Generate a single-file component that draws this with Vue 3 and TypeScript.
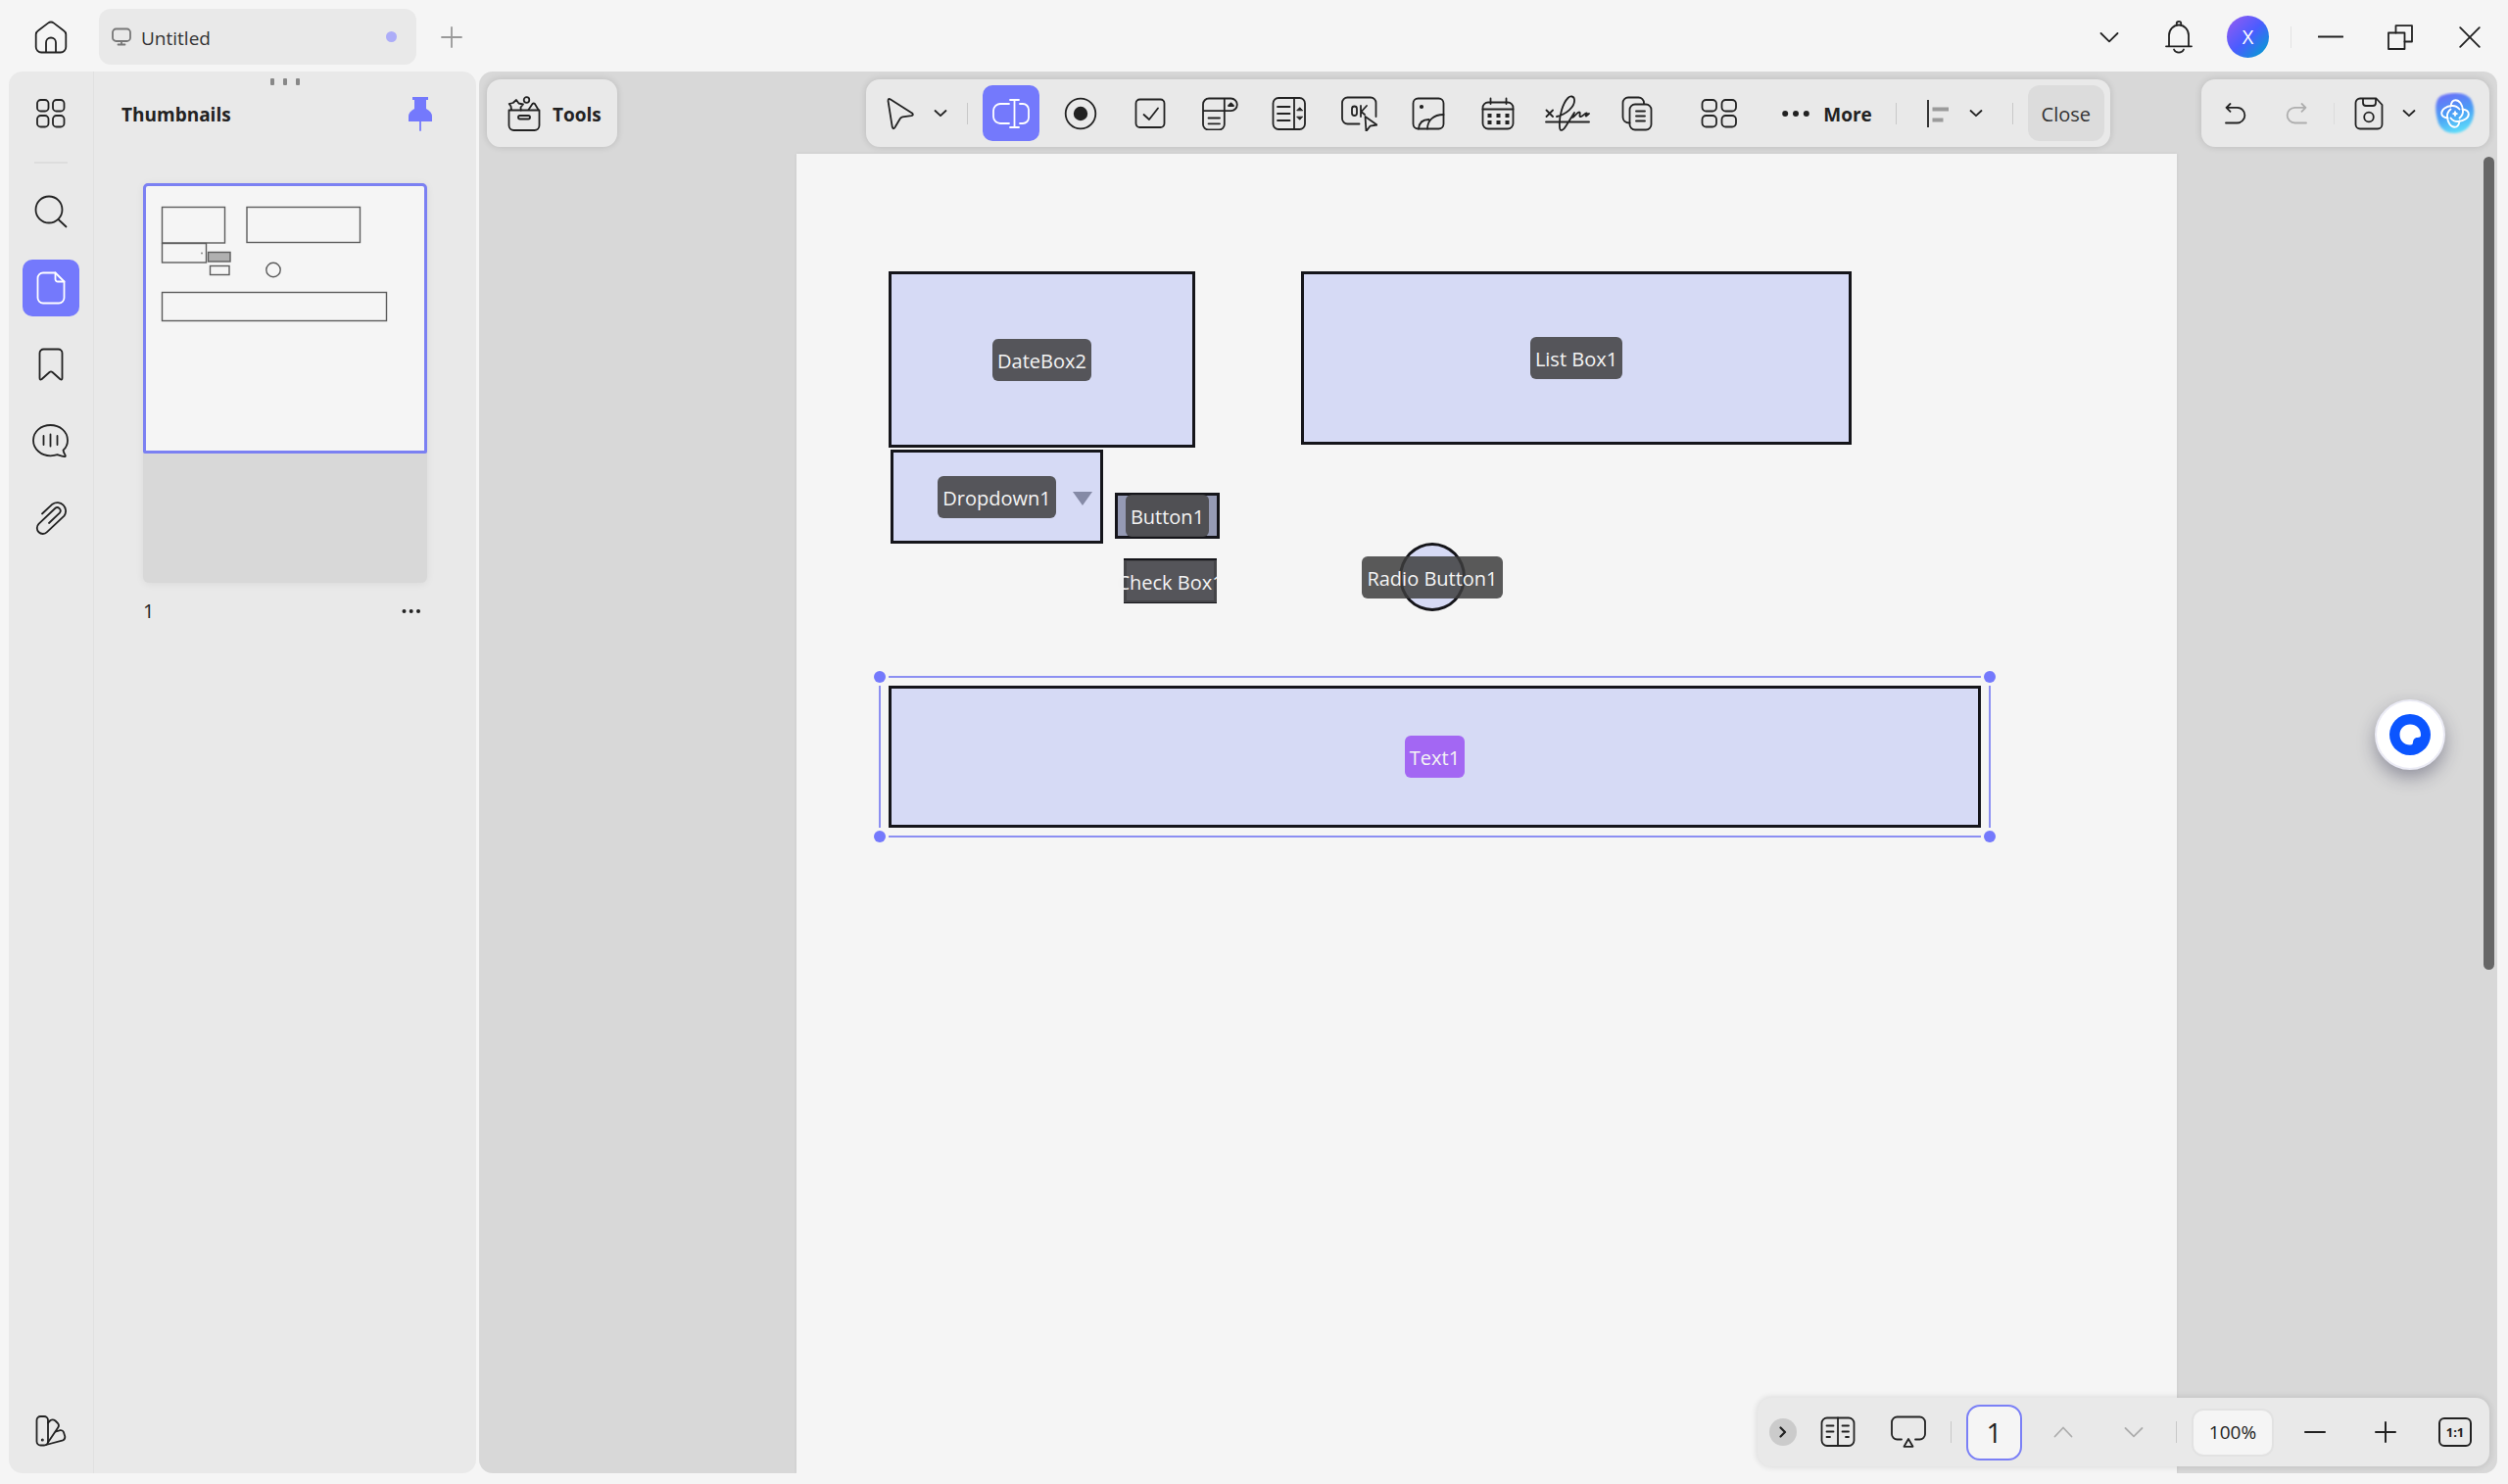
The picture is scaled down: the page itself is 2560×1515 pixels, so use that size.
<script setup lang="ts">
import { h, ref } from 'vue'

type Glyph = { w: number; h: number; body: string }

const glyphs: Record<string, Glyph> = {
  home: { w: 34, h: 34, body: '<path d="M14 2.6a5 5 0 0 1 6 0l10 7.6a5 5 0 0 1 2.3 4V27a5.5 5.5 0 0 1-5.5 5.5H7.2A5.5 5.5 0 0 1 1.7 27V14.2a5 5 0 0 1 2.3-4ZM12 32.5V22.5a5 5 0 0 1 10 0v10"/>' },
  monitor: { w: 20, h: 20, body: '<rect x="1" y="1.5" width="18" height="12.5" rx="3.5"/><path d="M10 14v3M6.5 17.5h7"/>' },
  plus: { w: 22, h: 22, body: '<path d="M11 1v20M1 11h20"/>' },
  chevronWide: { w: 20, h: 12, body: '<path d="M1.5 2 10 10.3 18.5 2"/>' },
  bell: { w: 28, h: 34, body: '<path d="M4 26V15a10 10.5 0 0 1 20 0v11M1 26.3h26M9 29.5a5.5 5.5 0 0 0 10 0M11.7 4.5V3.2a2.3 2.3 0 0 1 4.6 0v1.3"/>' },
  minimize: { w: 26, h: 26, body: '<path d="M.5 12.5h25"/>' },
  restore: { w: 26, h: 26, body: '<path d="M1 8.5h16.5V25H1Z"/><path d="M8.5 8.5V1.2H25V17.5h-7.5"/>' },
  close: { w: 22, h: 22, body: '<path d="m1.2 1.2 19.6 19.6M20.8 1.2 1.2 20.8"/>' },
  apps: { w: 30, h: 30, body: '<rect x="1" y="1" width="11.5" height="11.5" rx="3.6"/><rect x="17" y="1" width="11.5" height="11.5" rx="3.6"/><rect x="1" y="17" width="11.5" height="11.5" rx="3.6"/><rect x="17" y="17" width="11.5" height="11.5" rx="3.6"/>' },
  search: { w: 34, h: 34, body: '<circle cx="15" cy="15" r="13.5"/><path d="m24.5 25 8 7.5"/>' },
  page: { w: 30, h: 34, body: '<path d="M7 1.5h12.5L28.5 10.5V27a5.5 5.5 0 0 1-5.5 5.5H7A5.5 5.5 0 0 1 1.5 27V7A5.5 5.5 0 0 1 7 1.5Z"/><path d="M19.5 1.5v6.5a2.5 2.5 0 0 0 2.5 2.5h6.5"/>' },
  bookmark: { w: 26, h: 34, body: '<path d="M5.5 1.5h15a4 4 0 0 1 4 4V31q0 2.6-2.2 1L14.5 25q-1.5-1.2-3 0L3.7 32q-2.2 1.6-2.2-1V5.500a4 4 0 0 1 4-4Z"/>' },
  comment: { w: 38, h: 36, body: '<path d="M18.500 2C28 2 36 8.500 36 17.500c0 4-1.500 7.500-4.500 10.200.5 2 1.500 4 2.200 5.200q.5 1.400-1 1.200c-2.700-.5-5-1.300-7-1.900-2.200.7-4.500 1.100-7.200 1.100C9 33.300 1 26.500 1 17.500 1 8.500 9 2 18.500 2Z"/><path d="M11.500 13v9M18.500 11.500v12M25.500 13v9"/>' },
  clip: { w: 32, h: 36, body: '<path d="M7 14.500 17.500 4.700a8.600 8.600 0 0 1 12 12L12 33.200a5.900 5.900 0 0 1-8.500-8.400L20.200 9a3.300 3.300 0 0 1 4.700 4.600L14 24"/>' },
  swatches: { w: 32, h: 34, body: '<rect x="1.500" y="2" width="11.500" height="29.500" rx="4"/><path d="M13 8.500l2.500-2.500q2.500-1.500 5 .5l2.500 2.500q1.800 2 .3 4.300L13 28.500M21 17.500l4.500-1.300q2.500-.3 3.500 2l1.300 4.300q.3 2.700-2 3.800L11 31M19.500 18.500l1.500-1"/><circle cx="7.300" cy="26" r=".6"/>' },
  pin: { w: 24, h: 36, body: '<path fill="currentColor" stroke="none" d="M4 1h16v3h-2v9q6 3 6 8v5H0v-5q0-5 6-8V4H4Z"/><path d="M12 26v9"/>' },
  toolbox: { w: 34, h: 36, body: '<path d="M1.500 14.500h31V30a5 5 0 0 1-5 5h-21a5 5 0 0 1-5-5Z"/><rect x="11" y="20" width="12" height="3.500" rx="1.700"/><path d="m4 14-.5-3.500L1.700 8l4-1L9 4l2.500 3.500 4.500 1-2.500 3 .2 3M21.500 14l4-6q1.200-1 2.400 0l3.600 6"/><circle cx="19.500" cy="4" r="2.800"/>' },
  pointer: { w: 28, h: 34, body: '<path d="M1.500 4q0-3 2.500-1.500L26 16.500q2 2-.8 2.600l-9 1.200q-1.400.3-2.200 1.500L8.500 31q-1.800 2.600-2.700-.2Z"/>' },
  chevron: { w: 14, h: 10, body: '<path d="m1.500 2 5.500 5.200L12.500 2"/>' },
  textField: { w: 40, h: 32, body: '<path d="M18 6H9a7 7 0 0 0-7 7v6a7 7 0 0 0 7 7h9M29 6h3a6 6 0 0 1 6 6v8a6 6 0 0 1-6 6h-3M23.500 2v28M19 2h9M19 30h9"/>' },
  radio: { w: 34, h: 34, body: '<circle cx="17" cy="17" r="15.300"/><circle cx="17" cy="17" r="7.200" fill="currentColor" stroke="none"/>' },
  check: { w: 32, h: 32, body: '<rect x="1.500" y="1.500" width="29" height="28.500" rx="4"/><path d="m9.500 17 5.500 5 9-11.500"/>' },
  combo: { w: 38, h: 34, body: '<path d="M8 1.500h22.500a6.300 6.300 0 0 1 0 12.600H2M8 1.500a6 6 0 0 0-6 6V28a5.500 5.500 0 0 0 5.500 5.500h10.800a5.500 5.500 0 0 0 5.500-5.500V1.500M7.500 21.500H19M7.500 27.300H19"/><path fill="currentColor" d="m28 9 2.500-2.500L33 9Z"/>' },
  list: { w: 36, h: 34, body: '<rect x="1.500" y="1" width="32.500" height="32" rx="5.500"/><path d="M23 1v32M6 10h12.500M6 17h12.500M6 24h12.500"/><path fill="currentColor" stroke-width="1" d="m26 13.500 2.700-2.700 2.700 2.700ZM26 20.500l2.700 2.700 2.700-2.700Z"/>' },
  okButton: { w: 38, h: 36, body: '<path d="M19.500 28.500H7.500A5.500 5.500 0 0 1 2 23V7a5.500 5.500 0 0 1 5.500-5.500H31A5.500 5.500 0 0 1 36.500 7v14"/><rect x="12" y="10.500" width="5" height="9.500" rx="2.500"/><path d="M21 10v11M27 10l-5.500 6 3.500 3M25.500 21l12 8.500-7 1.200-4 5.300Z"/>' },
  image: { w: 34, h: 34, body: '<rect x="1.500" y="1.500" width="31" height="31" rx="5"/><circle cx="10" cy="10" r="1.200" fill="currentColor"/><path d="M7 32.500c.5-6 4.500-9.500 10.500-9.500M16 32.500c0-8.500 6-14.500 16.500-14.500"/>' },
  calendar: { w: 34, h: 34, body: '<rect x="1.500" y="5.500" width="31" height="27" rx="5.500"/><path d="M1.500 12.500h31M9.500 1.500V7M25.500 1.500V7"/><path stroke-width="4" stroke-linecap="butt" stroke-dasharray="4 5" d="M6.500 19h22M6.500 26h22"/>' },
  signature: { w: 46, h: 40, body: '<path d="m1.500 16.500 6.500 6.500M8 16.500 1.500 23M1 28.500h44M12 23c9-2 19-10 18-17.500C29.500 2 26 1.500 23.500 4 18.500 9 14 22 15 34c.3 5 4 3 6.500-1.500L30 19l-2 5c3-1 4.500-5.500 7-5.500 2 0-1 5 1.500 4.500s4-3.500 6-3.500c1.500 0-2 3-.5 3l3-2.500"/>' },
  copy: { w: 32, h: 36, body: '<path d="M8.500 27.500C4 27.500 1.500 25 1.500 21.500V7A5.500 5.500 0 0 1 7 1.500h10.500A5.500 5.500 0 0 1 23 7v1"/><rect x="8.500" y="8.500" width="22" height="26" rx="5.500"/><path d="M15 15.500h9M15 20.500h9M15 25.500h9"/>' },
  fieldGrid: { w: 38, h: 30, body: '<rect x="1.500" y="1" width="14.500" height="11.500" rx="4"/><rect x="21.500" y="1" width="14.500" height="11.500" rx="4"/><rect x="1.500" y="17" width="14.500" height="11.500" rx="4"/><rect x="21.500" y="17" width="14.500" height="11.500" rx="4"/>' },
  dots: { w: 28, h: 8, body: '<g fill="currentColor" stroke="none"><circle cx="3.200" cy="4" r="3"/><circle cx="14" cy="4" r="3"/><circle cx="24.800" cy="4" r="3"/></g>' },
  dotsSmall: { w: 20, h: 6, body: '<g fill="currentColor" stroke="none"><circle cx="2.500" cy="3" r="2"/><circle cx="9.700" cy="3" r="2"/><circle cx="17" cy="3" r="2"/></g>' },
  align: { w: 24, h: 28, body: '<path stroke-linecap="butt" d="M2 0v28"/><path stroke="#9b9b9b" stroke-width="4" stroke-linecap="butt" d="M6.500 9.500h16.500M6.500 20.500h11"/>' },
  undo: { w: 22, h: 22, body: '<path d="M1 20.500h11.500a7.800 7.800 0 0 0 0-15.700H1.500M5.500 1 1.500 4.800l4 4"/>' },
  redo: { w: 22, h: 22, body: '<path d="M21 20.500H9.500a7.800 7.800 0 0 1 0-15.700h11M16.500 1l4 3.800-4 4"/>' },
  save: { w: 30, h: 34, body: '<path d="M6 1.500h16.500L28.500 8v20a4.500 4.500 0 0 1-4.500 4.500H6A4.500 4.500 0 0 1 1.500 28V6A4.500 4.500 0 0 1 6 1.500ZM9 2v4a3 3 0 0 0 3 3h7a3 3 0 0 0 3-3V2"/><circle cx="15" cy="20.500" r="4.800"/>' },
  arrowRight: { w: 8, h: 14, body: '<path stroke-width="2.200" d="m1.500 2.500 4.500 4.500-4.500 4.500"/>' },
  book: { w: 36, h: 32, body: '<rect x="1.500" y="1.500" width="33" height="28.500" rx="5.500"/><path d="M18 1.500V30M6.500 9.500h7M6.500 15.500h7M6.500 21h3.500M22.500 9.500h6.500M22.500 15.500h6.500M26 21h3"/>' },
  screen: { w: 38, h: 34, body: '<path d="M12 24.500H7.500A5.500 5.500 0 0 1 2 19V7a5.500 5.500 0 0 1 5.500-5.500h23A5.500 5.500 0 0 1 36 7v12a5.500 5.500 0 0 1-5.500 5.500H26M19 24l4.500 7.800h-9Z"/>' },
  up: { w: 20, h: 12, body: '<path d="M1.500 10.500 10 1.500l8.500 9"/>' },
  minus: { w: 22, h: 22, body: '<path stroke-width="2" d="M1 11h20"/>' },
  plusDark: { w: 22, h: 22, body: '<path stroke-width="2" d="M1 11h20M11 1v20"/>' },
  assistant: {
    w: 44, h: 44,
    body: '<defs><linearGradient id="aiFill" x1=".3" y1="0" x2=".6" y2="1"><stop offset="0" stop-color="#6a70f8"/><stop offset=".5" stop-color="#4a9df5"/><stop offset="1" stop-color="#5fe0fa"/></linearGradient><filter id="aiSoft" x="-10%" y="-10%" width="120%" height="120%"><feGaussianBlur stdDeviation=".9"/></filter><path id="aiLoop" d="M17.500 14.500C18 10.500 19.800 8.200 22.500 8.200c4 0 7 4.800 7.500 10.300.3 3.200-1 6-3.500 8"/></defs><path filter="url(#aiSoft)" fill="url(#aiFill)" stroke="none" d="M6 5q6-4 17-4 12 0 16 8 4 10 1 19-5 13-18 14Q9 42 5 32-1 12 6 5Z"/><g stroke="#fff" stroke-width="1.900"><use href="#aiLoop"/><use href="#aiLoop" transform="rotate(90 22 22)"/><use href="#aiLoop" transform="rotate(180 22 22)"/><use href="#aiLoop" transform="rotate(270 22 22)"/></g><path fill="#fff" stroke="none" d="M22 18.500q.6 2.900 3.500 3.500-2.900.6-3.500 3.500-.6-2.900-3.500-3.500 2.900-.6 3.500-3.500Z"/>',
  },
}

const Icon = (props: { name: string }) => {
  const g = glyphs[props.name]
  return h('svg', {
    class: 'icon',
    width: g.w,
    height: g.h,
    viewBox: `0 0 ${g.w} ${g.h}`,
    fill: 'none',
    stroke: 'currentColor',
    'stroke-width': 1.8,
    'stroke-linecap': 'round',
    'stroke-linejoin': 'round',
    'aria-hidden': 'true',
    innerHTML: g.body,
  })
}
Icon.props = ['name']

const activePanel = ref('page')
const panels = [
  { id: 'search', label: 'Search' },
  { id: 'page', label: 'Thumbnails' },
  { id: 'bookmark', label: 'Bookmarks' },
  { id: 'comment', label: 'Comments' },
  { id: 'clip', label: 'Attachments' },
]

const activeTool = ref('textField')
const fieldTools = [
  { id: 'textField', label: 'Text field' },
  { id: 'radio', label: 'Radio button' },
  { id: 'check', label: 'Check box' },
  { id: 'combo', label: 'Dropdown' },
  { id: 'list', label: 'List box' },
  { id: 'okButton', label: 'Button' },
  { id: 'image', label: 'Image' },
  { id: 'calendar', label: 'Date box' },
  { id: 'signature', label: 'Signature' },
  { id: 'copy', label: 'Duplicate' },
]

type Field = { name: string; kind: string; x: number; y: number; w: number; h: number }
const fields: Field[] = [
  { name: 'DateBox2', kind: 'box', x: 94, y: 120, w: 313, h: 180 },
  { name: 'List Box1', kind: 'box', x: 515, y: 120, w: 562, h: 177 },
  { name: 'Dropdown1', kind: 'dropdown', x: 96, y: 302, w: 217, h: 96 },
  { name: 'Button1', kind: 'button', x: 325, y: 346, w: 107, h: 47 },
  { name: 'Check Box1', kind: 'check', x: 334, y: 413, w: 95, h: 46 },
  { name: 'Radio Button1', kind: 'radio', x: 615, y: 397, w: 68, h: 70 },
  { name: 'Text1', kind: 'selected', x: 94, y: 543, w: 1115, h: 145 },
]
const place = (f: Field) => ({ left: `${f.x}px`, top: `${f.y}px`, width: `${f.w}px`, height: `${f.h}px` })

const pageNumber = ref('1')
const zoomLevel = ref('100%')
</script>

<template>
  <div class="app">
    <header class="titlebar">
      <button class="home" aria-label="Home"><Icon name="home" /></button>
      <button class="tab">
        <Icon name="monitor" />
        <span class="tab-name">Untitled</span>
        <span class="unsaved"></span>
      </button>
      <button class="new-tab" aria-label="New tab"><Icon name="plus" /></button>
      <div class="window-tools">
        <button aria-label="Show tabs"><Icon name="chevronWide" /></button>
        <button aria-label="Notifications"><Icon name="bell" /></button>
        <button class="avatar" aria-label="Account">X</button>
        <span class="rule"></span>
        <button aria-label="Minimize"><Icon name="minimize" /></button>
        <button aria-label="Restore"><Icon name="restore" /></button>
        <button aria-label="Close window"><Icon name="close" /></button>
      </div>
    </header>

    <div class="body">
      <aside class="side">
        <nav class="rail">
          <button class="rail-button" aria-label="Menu"><Icon name="apps" /></button>
          <span class="rail-rule"></span>
          <button
            v-for="p in panels"
            :key="p.id"
            class="rail-button"
            :class="{ active: activePanel === p.id }"
            :aria-label="p.label"
            @click="activePanel = p.id"
          >
            <Icon :name="p.id" />
          </button>
          <button class="rail-button last" aria-label="Theme"><Icon name="swatches" /></button>
        </nav>
        <section class="panel">
          <div class="grip"><i></i><i></i><i></i></div>
          <div class="panel-head">
            <h2>Thumbnails</h2>
            <button class="pin" aria-label="Pin panel"><Icon name="pin" /></button>
          </div>
          <button class="thumb" aria-label="Page 1">
            <span class="thumb-view">
              <svg width="284" height="270" viewBox="0 0 284 270" fill="none" stroke="#5c5c5c" stroke-width="1.4">
                <rect x="16.5" y="21.5" width="64" height="36.5" />
                <rect x="103" y="21.5" width="115.500" height="36" />
                <rect x="16.5" y="58.500" width="45" height="19.500" />
                <circle cx="57" cy="68.500" r="1" fill="#888" stroke="none" />
                <rect x="63.500" y="67.500" width="22.500" height="9.500" fill="#b0b0b0" />
                <rect x="65.500" y="81.500" width="19.500" height="9" />
                <circle cx="130" cy="85.500" r="7.2" />
                <rect x="16.5" y="108.500" width="229" height="29" />
              </svg>
            </span>
          </button>
          <div class="thumb-foot">
            <span>1</span>
            <button aria-label="Page options"><Icon name="dotsSmall" /></button>
          </div>
        </section>
      </aside>

      <main class="workspace">
        <div class="bars">
          <button class="bar tools"><Icon name="toolbox" /><b>Tools</b></button>
          <div class="bar form-bar">
            <button class="tool" aria-label="Select"><Icon name="pointer" /></button>
            <button class="drop" aria-label="Select options"><Icon name="chevron" /></button>
            <span class="rule"></span>
            <div class="field-tools">
              <button
                v-for="t in fieldTools"
                :key="t.id"
                class="tool"
                :class="{ active: activeTool === t.id }"
                :aria-label="t.label"
                @click="activeTool = t.id"
              >
                <Icon :name="t.id" />
              </button>
            </div>
            <button class="tool spaced" aria-label="Field grid"><Icon name="fieldGrid" /></button>
            <button class="more"><Icon name="dots" /><b>More</b></button>
            <span class="rule"></span>
            <div class="align-group">
              <button class="tool" aria-label="Align"><Icon name="align" /></button>
              <button class="drop" aria-label="Align options"><Icon name="chevron" /></button>
            </div>
            <span class="rule"></span>
            <button class="close-form">Close</button>
          </div>
          <div class="bar file-bar">
            <button class="tool" aria-label="Undo"><Icon name="undo" /></button>
            <button class="tool faint" aria-label="Redo" disabled><Icon name="redo" /></button>
            <span class="rule"></span>
            <button class="tool" aria-label="Save"><Icon name="save" /></button>
            <button class="drop" aria-label="Save options"><Icon name="chevron" /></button>
            <button class="tool assistant" aria-label="Assistant"><Icon name="assistant" /></button>
          </div>
        </div>

        <article class="sheet">
          <div v-for="f in fields" :key="f.name" class="field" :class="f.kind" :style="place(f)">
            <span class="name">{{ f.name }}</span>
            <span v-if="f.kind === 'dropdown'" class="arrow"></span>
            <template v-if="f.kind === 'selected'">
              <span class="frame across"></span>
              <span class="frame down"></span>
              <i class="knob nw"></i><i class="knob ne"></i><i class="knob sw"></i><i class="knob se"></i>
            </template>
          </div>
        </article>

        <div class="scrollbar"></div>

        <button class="helper" aria-label="Chat">
          <svg width="42" height="42" viewBox="0 0 42 42" aria-hidden="true">
            <circle cx="21" cy="21" r="21" fill="#0b55ff" />
            <path fill="#fff" d="M21 10.500c6.500 0 11 4.500 11 10.500 0 2-.5 2.700-2 2.800-4 .2-5.500 1.500-6 5-.2 2.200-.8 2.700-3 2.700-6 0-10.500-4.500-10.500-10.500S15 10.500 21 10.500Z" />
          </svg>
        </button>

        <footer class="bar status">
          <button class="collapse" aria-label="Collapse"><Icon name="arrowRight" /></button>
          <button class="step" aria-label="Page layout"><Icon name="book" /></button>
          <button class="step" aria-label="Slideshow"><Icon name="screen" /></button>
          <span class="rule"></span>
          <input v-model="pageNumber" class="page-number" aria-label="Page number" />
          <button class="step faint" aria-label="Previous page" disabled><Icon name="up" /></button>
          <button class="step faint" aria-label="Next page" disabled><Icon name="chevronWide" /></button>
          <span class="rule"></span>
          <input v-model="zoomLevel" class="zoom" aria-label="Zoom" />
          <button class="step" aria-label="Zoom out"><Icon name="minus" /></button>
          <button class="step" aria-label="Zoom in"><Icon name="plusDark" /></button>
          <button class="actual" aria-label="Actual size"><span>1:1</span></button>
        </footer>
      </main>
    </div>
  </div>
</template>

<style>
body {
  margin: 0;
}
</style>

<style scoped>
.app {
  display: flex;
  flex-direction: column;
  height: 100vh;
  background: #f5f5f5;
  color: #222;
  font: 20px/28px "Open Sans", "Noto Sans", sans-serif;
}
.app * {
  box-sizing: border-box;
}
button,
input {
  margin: 0;
  padding: 0;
  border: 0;
  background: none;
  color: inherit;
  font: inherit;
}
button {
  display: flex;
  align-items: center;
  justify-content: center;
}
b,
h2 {
  margin: 0;
  padding-top: 2px;
  font-size: 19px;
  font-weight: 700;
}
.icon {
  display: block;
  flex: none;
}

.titlebar {
  display: flex;
  align-items: center;
  flex: none;
  height: 73px;
  padding: 2px 4px 0 9px;
}
.home {
  width: 85px;
}
.tab {
  width: 324px;
  height: 57px;
  margin: 0 7px;
  padding: 0 20px 0 13px;
  border-radius: 12px;
  background: #e9e9e9;
  color: #777;
}
.tab-name {
  flex: 1;
  margin-left: 10px;
  padding-top: 2px;
  color: #333;
  font-size: 19px;
  text-align: left;
}
.unsaved {
  width: 11px;
  height: 11px;
  border-radius: 50%;
  background: #adadf8;
}
.new-tab {
  width: 58px;
  color: #999;
}
.window-tools {
  display: flex;
  align-items: center;
  margin-left: auto;
}
.window-tools button {
  width: 71px;
  height: 58px;
}
.window-tools .avatar {
  width: 43px;
  height: 43px;
  margin: 0 22px 0 14px;
  border-radius: 50%;
  background: linear-gradient(135deg, #9a5cf0 0%, #4a5cff 50%, #00a0d0 95%);
  color: #fff;
}
.rule {
  flex: none;
  width: 1px;
  height: 22px;
  background: #c8c8c8;
}
.window-tools .rule {
  margin-right: 4px;
  background: #e2e2e2;
}

.body {
  display: flex;
  flex: 1;
  gap: 3px;
  min-height: 0;
  padding: 0 11px 11px 9px;
}
.side {
  display: flex;
  flex: none;
  width: 477px;
  border-radius: 14px;
  background: #e9e9e9;
}
.rail {
  display: flex;
  flex-direction: column;
  align-items: center;
  gap: 20px;
  width: 87px;
  padding: 14px 0;
  border-right: 1px solid #e0e0e0;
}
.rail-button {
  flex: none;
  width: 58px;
  height: 58px;
  border-radius: 10px;
}
.rail-rule {
  width: 34px;
  height: 2px;
  background: #ddd;
}
.active {
  background: #7479fc;
  color: #fff;
}
.last {
  margin-top: auto;
}
.panel {
  flex: 1;
  padding: 7px 0;
}
.grip {
  display: flex;
  justify-content: center;
  gap: 9px;
}
.grip i {
  width: 4px;
  height: 7px;
  border-radius: 1px;
  background: #888;
}
.panel-head {
  display: flex;
  align-items: center;
  justify-content: space-between;
  height: 58px;
  padding: 0 45px 0 28px;
}
.pin {
  color: #7479fc;
}
.thumb {
  display: flex;
  flex-direction: column;
  align-items: stretch;
  justify-content: flex-start;
  width: 290px;
  height: 408px;
  margin: 42px auto 0;
  border-radius: 6px;
  background: #d8d8d8;
  box-shadow: 0 1px 8px #0001;
}
.thumb-view {
  height: 276px;
  border: 3px solid #7b80f2;
  border-radius: 5px 5px 2px 2px;
  background: #f5f5f5;
}
.thumb-view svg {
  display: block;
}
.thumb-foot {
  display: flex;
  align-items: center;
  justify-content: space-between;
  padding: 15px 56px 0 50px;
}

.workspace {
  position: relative;
  display: flex;
  flex: 1;
  flex-direction: column;
  min-width: 0;
  overflow: hidden;
  border-radius: 14px;
  background: #d8d8d8;
}
.bars {
  position: relative;
  z-index: 1;
  display: grid;
  grid-template-columns: 1fr auto 1fr;
  padding: 8px 8px 7px;
}
.bar {
  display: flex;
  align-items: center;
  height: 69px;
  border-radius: 14px;
  background: #e9e9e9;
  box-shadow: 0 0 6px 1px #0000001c;
}
.tools {
  justify-self: start;
  gap: 12px;
  padding: 0 16px 0 21px;
}
.form-bar {
  padding: 0 6px;
}
.tool {
  flex: none;
  width: 58px;
  height: 57px;
  border-radius: 10px;
}
.drop {
  width: 24px;
  height: 57px;
}
.form-bar .rule {
  margin: 0 15px;
}
.field-tools {
  display: flex;
  gap: 13px;
}
.spaced {
  margin: 0 26px;
}
.more {
  gap: 14px;
  padding: 0 9px;
}
.align-group {
  display: flex;
  padding-right: 10px;
}
.align-group .tool {
  width: 54px;
}
.close-form {
  width: 78px;
  height: 57px;
  padding-top: 2px;
  border-radius: 12px;
  background: #dcdcdc;
  color: #333;
}
.file-bar {
  justify-self: end;
  padding: 0 6px;
}
.file-bar .tool:nth-child(2) {
  margin-left: 4px;
}
.file-bar .assistant {
  margin-left: 6px;
}
.file-bar .rule {
  margin: 0 6px 0 9px;
  background: #dcdcdc;
}
.faint {
  color: #aeaeae;
}

.sheet {
  position: relative;
  flex: 1;
  align-self: center;
  width: 68.4%;
  margin-right: 3px;
  background: #f5f5f5;
  box-shadow: 0 0 4px #0001;
}
.field {
  position: absolute;
  display: flex;
  align-items: center;
  justify-content: center;
  border: 3px solid #15151a;
  background: #d6daf5;
}
.name {
  flex: none;
  height: 43px;
  padding: 0 5px;
  border-radius: 6px;
  background: #4a4a4ceb;
  color: #f4f4f4;
  line-height: 46px;
  white-space: nowrap;
}
.field.button {
  background: #959ab4;
}
.check .name {
  display: flex;
  justify-content: center;
  width: 95px;
  padding: 0;
  border-radius: 0;
}
.radio {
  border-radius: 50%;
}
.radio .name {
  background: #3c3c3cd8;
}
.selected .name {
  background: #a367f3;
}
.arrow {
  position: absolute;
  top: 40px;
  right: 8px;
  border: 10px solid transparent;
  border-top: 14px solid #858aa6;
  border-bottom: 0;
}
.frame {
  position: absolute;
  border: 0 solid #8c8ff2;
}
.across {
  inset: -13px -3px;
  border-width: 2px 0;
}
.down {
  inset: -3px -13px;
  border-width: 0 2px;
}
.knob {
  position: absolute;
  width: 12px;
  height: 12px;
  border-radius: 50%;
  background: #7479fc;
}
.nw,
.ne {
  top: -18px;
}
.sw,
.se {
  bottom: -18px;
}
.nw,
.sw {
  left: -18px;
}
.ne,
.se {
  right: -18px;
}

.scrollbar {
  position: absolute;
  top: 87px;
  right: 3px;
  width: 11px;
  height: 58%;
  border-radius: 6px;
  background: #666;
}
.helper {
  position: absolute;
  top: 641px;
  right: 53px;
  width: 72px;
  height: 72px;
  border: 2px solid #ebebf5;
  border-radius: 50%;
  background: #fff;
  box-shadow: 0 8px 18px #20204060;
}
.status {
  position: absolute;
  right: 8px;
  bottom: 7px;
  height: 70px;
  padding-left: 12px;
}
.collapse {
  width: 28px;
  height: 28px;
  margin-right: 6px;
  border-radius: 50%;
  background: #cbcbcb;
}
.step {
  width: 72px;
  height: 57px;
}
.status .rule {
  margin: 0 15px 0 7px;
}
.page-number,
.zoom {
  margin-right: 6px;
  background: #f5f5f5;
  text-align: center;
}
.page-number {
  width: 57px;
  height: 57px;
  border: 2px solid #7b80f6;
  border-radius: 14px;
  font-size: 28px;
}
.zoom {
  width: 84px;
  height: 49px;
  border: 2px solid #e2e2e2;
  border-radius: 12px;
  font-size: 19px;
}
.actual {
  width: 70px;
  height: 57px;
}
.actual span {
  width: 34px;
  height: 30px;
  border: 2px solid #222;
  border-radius: 6px;
  font-size: 13px;
  font-weight: 700;
  line-height: 26px;
}
</style>
